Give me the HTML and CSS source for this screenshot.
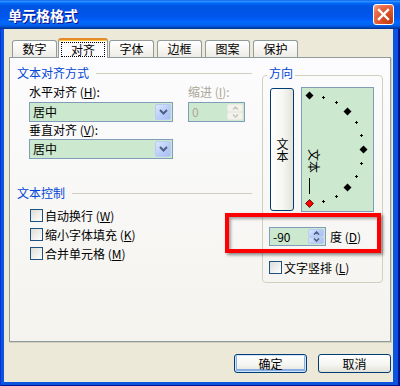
FILE: index.html
```html
<!DOCTYPE html>
<html>
<head>
  <meta charset="UTF-8">
  <title>单元格格式</title>
  <link rel="stylesheet" href="styles.css">
</head>
<body>
  <div class="window">
    <div class="titlebar">
      <span class="title">单元格格式</span>
      <span class="close">
        <svg width="19" height="19" viewBox="0 0 19 19"><path d="M5 5L14 14M14 5L5 14" stroke="#fff" stroke-width="2.4" stroke-linecap="square"/></svg>
      </span>
    </div>

    <div class="client">
      <div class="tabs">
        <span class="tab">数字</span>
        <span class="tab active"><span class="focus">对齐</span></span>
        <span class="tab">字体</span>
        <span class="tab">边框</span>
        <span class="tab">图案</span>
        <span class="tab">保护</span>
      </div>

      <div class="panel">
        <div class="left-col">
          <div class="heading">文本对齐方式</div>
          <div class="fields">
            <div class="field-col wide">
              <div class="label">水平对齐 (<u>H</u>):</div>
              <div class="combo">
                <span class="value">居中</span>
                <span class="drop"><svg width="9" height="6" viewBox="0 0 9 6"><path d="M1 1L4.5 4.5L8 1" fill="none" stroke="#4d6185" stroke-width="2"/></svg></span>
              </div>
              <div class="label second">垂直对齐 (<u>V</u>):</div>
              <div class="combo">
                <span class="value">居中</span>
                <span class="drop"><svg width="9" height="6" viewBox="0 0 9 6"><path d="M1 1L4.5 4.5L8 1" fill="none" stroke="#4d6185" stroke-width="2"/></svg></span>
              </div>
            </div>
            <div class="field-col narrow disabled">
              <div class="label">缩进 (<u>I</u>):</div>
              <div class="spin">
                <span class="value">0</span>
                <span class="spin-btns">
                  <span class="half"><svg width="7" height="4" viewBox="0 0 7 4"><path d="M1 3.5L3.5 1L6 3.5" fill="none" stroke="#c9c7ba" stroke-width="1.6"/></svg></span>
                  <span class="half"><svg width="7" height="4" viewBox="0 0 7 4"><path d="M1 0.5L3.5 3L6 0.5" fill="none" stroke="#c9c7ba" stroke-width="1.6"/></svg></span>
                </span>
              </div>
            </div>
          </div>

          <div class="heading control">文本控制</div>
          <div class="checks">
            <div class="check"><span class="box"></span>自动换行 (<u>W</u>)</div>
            <div class="check"><span class="box"></span>缩小字体填充 (<u>K</u>)</div>
            <div class="check"><span class="box"></span>合并单元格 (<u>M</u>)</div>
          </div>
        </div>

        <fieldset class="orient">
          <legend>方向</legend>
          <div class="orient-top">
            <div class="vbtn"><span>文本</span></div>
            <div class="dial">
              <svg width="71" height="123" viewBox="0 0 71 123">
                <path d="M20 9.5h3M21.5 8v3M33 14.5h3M34.5 13v3M53 34.5h3M54.5 33v3M58 47.5h3M59.5 46v3M58 75.5h3M59.5 74v3M53 88.5h3M54.5 87v3M33 108.5h3M34.5 107v3M20 113.5h3M21.5 112v3" stroke="#000" stroke-width="1" shape-rendering="crispEdges"/>
                <polygon points="7.5,3.5 11.5,7.5 7.5,11.5 3.5,7.5" fill="#000"/>
                <polygon points="45.5,19.5 49.5,23.5 45.5,27.5 41.5,23.5" fill="#000"/>
                <polygon points="61.5,57.5 65.5,61.5 61.5,65.5 57.5,61.5" fill="#000"/>
                <polygon points="45.5,95.5 49.5,99.5 45.5,103.5 41.5,99.5" fill="#000"/>
                <text transform="translate(7 61) rotate(90)" font-size="12" font-family="Noto Sans CJK SC, sans-serif">文本</text>
                <path d="M7.5 90v16" stroke="#000" stroke-width="1" shape-rendering="crispEdges"/>
                <polygon points="7.5,111.5 11.5,115.5 7.5,119.5 3.5,115.5" fill="#f00" stroke="#400" stroke-width="0.8"/>
              </svg>
            </div>
          </div>
          <div class="degree-row">
            <div class="spin deg">
              <span class="value">-90</span>
              <span class="spin-btns blue">
                <span class="half"><svg width="7" height="4" viewBox="0 0 7 4"><path d="M1 3.5L3.5 1L6 3.5" fill="none" stroke="#4d6185" stroke-width="1.6"/></svg></span>
                <span class="half"><svg width="7" height="4" viewBox="0 0 7 4"><path d="M1 0.5L3.5 3L6 0.5" fill="none" stroke="#4d6185" stroke-width="1.6"/></svg></span>
              </span>
            </div>
            <span>度 (<u>D</u>)</span>
          </div>
          <div class="check vertical"><span class="box"></span>文字竖排 (<u>L</u>)</div>
        </fieldset>

        <div class="callout"></div>
      </div>

      <div class="buttons">
        <button class="default">确定</button>
        <button>取消</button>
      </div>
    </div>
  </div>
</body>
</html>
```

FILE: styles.css
```css
body {
  margin: 0;
  font-family: "Noto Sans CJK SC", sans-serif;
  font-size: 12px;
  color: #000;
}
.window {
  width: 400px;
  height: 386px;
  display: flex;
  flex-direction: column;
  background: #0a54e0;
  box-shadow: inset 1px 0 #0831d9, inset -2px -1px #00138c;
}
.titlebar {
  height: 29px;
  flex: none;
  display: flex;
  align-items: center;
  justify-content: space-between;
  padding: 0 6px 0 8px;
  background: linear-gradient(to bottom, #0058ee 0%, #3593ff 4%, #288eff 6%, #127dff 8%, #036ffc 10%, #0262ee 14%, #0057e5 20%, #0054e3 24%, #0055eb 56%, #005bf5 66%, #026afe 76%, #0062ef 86%, #0052d6 92%, #0040ab 96%, #003092 100%);
}
.title {
  color: #fff;
  font-weight: bold;
  font-size: 14px;
  line-height: 14px;
  text-shadow: 1px 1px #0f1089;
}
.close {
  width: 21px;
  height: 21px;
  box-sizing: border-box;
  border: 1px solid #fff;
  border-radius: 3px;
  display: flex;
  align-items: center;
  justify-content: center;
  background: radial-gradient(circle at 85% 85%, #c23a12 0%, #e0572f 50%, #e8734f 75%, #f5b39c 100%);
}
.close svg {
  display: block;
}
.client {
  flex: 1;
  margin: 0 7px 4px 4px;
  padding: 9px 2px 0 5px;
  background: #ece9d8;
  display: flex;
  flex-direction: column;
}
.tabs {
  display: flex;
  align-items: flex-end;
  gap: 3px;
  height: 19px;
  padding-left: 3px;
  position: relative;
  z-index: 1;
}
.tab {
  width: 45px;
  height: 17px;
  box-sizing: border-box;
  border: 1px solid #919b9c;
  border-bottom: none;
  border-radius: 3px 3px 0 0;
  background: linear-gradient(#fff, #f5f4f0 60%, #ecebe6);
  text-align: center;
  line-height: 16px;
}
.tab.active {
  width: 50px;
  height: 20px;
  margin: 0 -2px -1px;
  border-top: 2px solid #e68b2c;
  box-shadow: inset 0 1px #ffc73c;
  background: #fcfcfe;
  padding: 2px 2px 0;
}
.focus {
  display: block;
  height: 15px;
  line-height: 14px;
  box-sizing: border-box;
  border: 1px dotted #000;
}
.panel {
  position: relative;
  height: 285px;
  box-sizing: border-box;
  border: 1px solid #919b9c;
  background: linear-gradient(#fcfcfe, #f4f3ee);
  box-shadow: 1px 1px #d0d0bf;
  display: grid;
  grid-template-columns: 235px 121px;
  column-gap: 10px;
  align-items: start;
  padding: 9px 0 0 7px;
}
.heading {
  display: flex;
  align-items: center;
  height: 12px;
  line-height: 12px;
  color: #0046d5;
}
.heading::after {
  content: "";
  flex: 1;
  height: 1px;
  margin-left: 7px;
  background: #d0d0bf;
}
.heading.control {
  margin-top: 28px;
}
.fields {
  display: flex;
  gap: 15px;
  padding-left: 12px;
  margin-top: 7px;
}
.field-col {
  display: flex;
  flex-direction: column;
}
.field-col.wide {
  width: 144px;
}
.field-col.narrow {
  width: 57px;
}
.label {
  height: 12px;
  line-height: 12px;
  white-space: nowrap;
}
.label.second {
  margin-top: 2px;
}
.disabled .label {
  color: #aca899;
}
.combo,
.spin {
  margin-top: 4px;
  height: 20px;
  box-sizing: border-box;
  border: 1px solid #7f9db9;
  background: #cce8cf;
  display: flex;
  align-items: stretch;
}
.label.second + .combo {
  margin-top: 3px;
}
.value {
  flex: 1;
  padding-left: 3px;
  line-height: 18px;
}
.disabled .value {
  color: #aca899;
}
.drop {
  width: 16px;
  margin: 1px 1px 1px 0;
  border-radius: 2px;
  border: 1px solid #b9cbf3;
  box-sizing: border-box;
  background: linear-gradient(135deg, #dce7fd, #bccff9 50%, #a8bff5);
  display: flex;
  align-items: center;
  justify-content: center;
}
.drop svg,
.half svg {
  display: block;
}
.spin-btns {
  width: 16px;
  margin: 1px 1px 1px 0;
  display: flex;
  flex-direction: column;
}
.half {
  flex: 1;
  display: flex;
  align-items: center;
  justify-content: center;
  background: #f3f3ee;
  border-radius: 2px;
  border: 1px solid #eceae2;
}
.spin-btns.blue .half {
  background: linear-gradient(135deg, #dce7fd, #bccff9 50%, #a8bff5);
  border-color: #b9cbf3;
}
.checks {
  display: flex;
  flex-direction: column;
  gap: 6px;
  margin-top: 10px;
  padding-left: 13px;
}
.check {
  display: flex;
  align-items: center;
  height: 13px;
  line-height: 13px;
  white-space: nowrap;
}
.box {
  width: 13px;
  height: 13px;
  flex: none;
  box-sizing: border-box;
  border: 1px solid #1c5180;
  background: linear-gradient(135deg, #dcdcd7, #fff);
  margin-right: 2px;
}
.orient {
  margin: 0;
  padding: 0 0 8px 7px;
  border: 1px solid #d0d0bf;
  border-radius: 4px;
  min-width: 0;
}
.orient legend {
  padding: 0 2px 4px;
  margin-left: -3px;
  line-height: 12px;
  color: #0046d5;
}
.orient-top {
  display: flex;
  align-items: center;
  gap: 7px;
  margin-top: 4px;
}
.vbtn {
  width: 24px;
  height: 123px;
  box-sizing: border-box;
  border: 1px solid #003c74;
  border-radius: 3px;
  background: linear-gradient(to right, #fff, #f4f4f0 60%, #e3e1d8);
  display: flex;
  align-items: center;
  justify-content: center;
}
.vbtn span {
  writing-mode: vertical-rl;
  line-height: 12px;
}
.dial {
  width: 73px;
  height: 125px;
  box-sizing: border-box;
  border: 1px solid #7f9db9;
  background: #cce8cf;
}
.dial svg {
  display: block;
}
.degree-row {
  display: flex;
  align-items: center;
  gap: 4px;
  margin-top: 15px;
  margin-left: -1px;
}
.spin.deg {
  margin-top: 0;
  width: 57px;
  height: 19px;
}
.spin.deg .value {
  line-height: 17px;
}
.check.vertical {
  margin-top: 15px;
  margin-left: -1px;
}
.callout {
  position: absolute;
  left: 215px;
  top: 155px;
  width: 156px;
  height: 40px;
  box-sizing: border-box;
  border: 4px solid #f00;
  box-shadow: 2px 2px 3px rgba(0, 0, 0, 0.45), inset 2px 2px 3px rgba(0, 0, 0, 0.35);
}
.buttons {
  display: flex;
  justify-content: flex-end;
  gap: 11px;
  margin-top: 12px;
}
button {
  width: 73px;
  height: 19px;
  padding: 0;
  font-family: "Noto Sans CJK SC", sans-serif;
  font-size: 12px;
  line-height: 17px;
  color: #000;
  border: 1px solid #003c74;
  border-radius: 3px;
  background: linear-gradient(#fff, #f4f4f0 60%, #e3e1d8);
}
button.default {
  box-shadow: inset 0 0 0 1px #cee7ff, inset 0 -1px 0 2px #89ade4;
}
```
